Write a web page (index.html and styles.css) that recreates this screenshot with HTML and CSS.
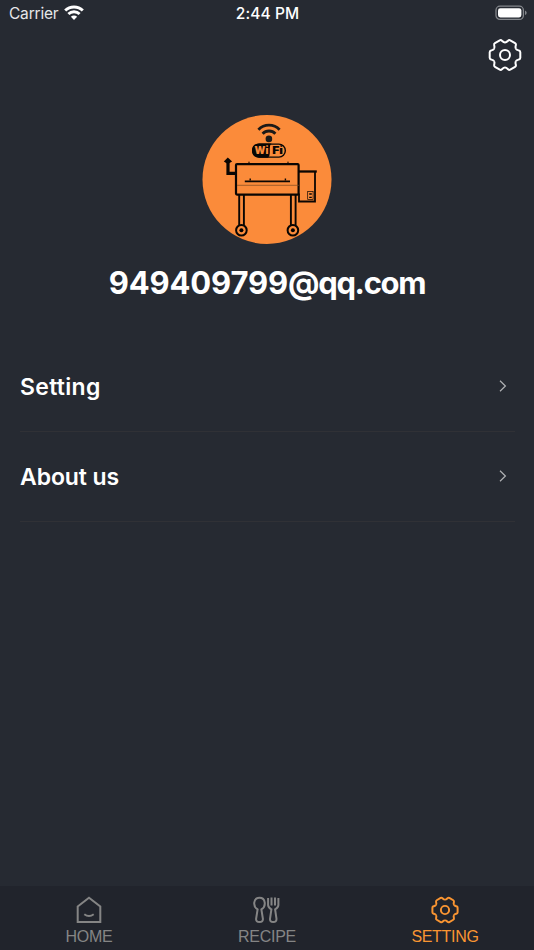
FILE: index.html
```html
<!DOCTYPE html>
<html lang="en">
<head>
<meta charset="utf-8">
<title>Setting</title>
<link rel="stylesheet" href="styles.css">
</head>
<body>
<svg class="defs" width="0" height="0" aria-hidden="true">
  <defs>
    <path id="tooth" d="M10.9 -6.3C11.7 -4.9 12.8 -4.8 13.9 -4.5Q15.3 -4.1 15.3 -2.8V2.8Q15.3 4.1 13.9 4.5C12.8 4.8 11.7 4.9 10.9 6.3"/>
    <symbol id="gear" viewBox="-17 -17 34 34">
      <use href="#tooth"/>
      <use href="#tooth" transform="rotate(60)"/>
      <use href="#tooth" transform="rotate(120)"/>
      <use href="#tooth" transform="rotate(180)"/>
      <use href="#tooth" transform="rotate(240)"/>
      <use href="#tooth" transform="rotate(300)"/>
      <circle r="5"/>
    </symbol>
  </defs>
</svg>
<div class="screen">
  <header class="status">
    <div class="carrier"><span>Carrier</span>
      <svg width="20" height="16" viewBox="0 0 20 16" fill="none" stroke="#fff" stroke-width="2.9">
        <path d="M1.2 5.6A12.4 12.4 0 0 1 18.8 5.6M4.4 9A8 8 0 0 1 15.6 9"/>
        <path d="M10 14.9L6.9 11.8A4.4 4.4 0 0 1 13.1 11.8Z" fill="#fff" stroke="none"/>
      </svg>
    </div>
    <div class="time">2:44 PM</div>
    <svg class="battery" width="32" height="16" viewBox="0 0 32 16">
      <rect x="1" y="1.2" width="27.4" height="13.2" rx="4" fill="none" stroke="#84878c" stroke-width="1.3"/>
      <rect x="3" y="3.2" width="23.4" height="9.2" rx="2.3" fill="#fff"/>
      <path d="M30 5.5Q31.7 6.2 31.7 7.8T30 10.1Z" fill="#84878c"/>
    </svg>
  </header>
  <div class="toolbar">
    <svg class="gear" width="34" height="34"><use href="#gear"/></svg>
  </div>
  <main>
    <section class="profile">
      <svg class="avatar" width="130" height="130" viewBox="0 -0.5 130 130">
        <circle cx="65" cy="65" r="64.5" fill="#fb8b3a"/>
        <g fill="none" stroke="#1c1a18" stroke-width="2.8">
          <path d="M56.4 15.2A14.5 14.5 0 0 1 77.6 15.2" />
          <path d="M60.6 19.2A8.9 8.9 0 0 1 73.4 19.2"/>
        </g>
        <circle cx="66.9" cy="24.4" r="3.3" fill="#1c1a18"/>
        <rect x="50.7" y="29.6" width="32.6" height="13" rx="6.4" fill="none" stroke="#080604" stroke-width="1.4"/>
        <path d="M57 29H69.5Q67.8 30.5 67.8 33.4V38.4Q67.8 41.6 66 43.2H57Q50 42.6 50 36T57 29Z" fill="#080604"/>
        <text class="wi" x="52.6" y="39.8" textLength="13.8" lengthAdjust="spacingAndGlyphs">Wi</text>
        <text class="fi" x="70.2" y="39.8" textLength="10.8" lengthAdjust="spacingAndGlyphs">Fi</text>
        <g fill="none" stroke="#0a0603">
          <rect x="34" y="49.6" width="62.6" height="30.5" rx="1" stroke-width="2.2"/>
          <path d="M35 70.8H97" stroke="#7d4a22" stroke-width=".7"/>
          <path d="M42.8 66.8H88" stroke-width="1.7"/>
          <path d="M48.2 66V64M83.4 66V64M47 48.3V47.3M86 48.3V47.3" stroke-width="1.4"/>
          <path d="M34 58.8H26V47" stroke-width="3.2"/>
          <path d="M97 57H114.8" stroke-width="2.3"/>
          <path d="M113 57V87H97V79" stroke-width="1.8"/>
          <path d="M37.2 80V111M41.9 80V111M88.9 80V111M93.6 80V111" stroke-width="1.9"/>
          <rect x="105.7" y="76.9" width="5.4" height="8.2" stroke-width=".7"/>
          <path d="M107.2 79.5H109.8M107.2 82.9H109.8" stroke-width="1.4"/>
          <circle cx="39.4" cy="115.8" r="5.3" stroke-width="2"/>
          <circle cx="90.9" cy="115.8" r="5.3" stroke-width="2"/>
        </g>
        <path d="M25.8 43.1L30.1 47L25.8 49.6L21.8 47Z" fill="#0a0603"/>
        <circle cx="39.4" cy="115.8" r="2"/><circle cx="90.9" cy="115.8" r="2"/>
      </svg>
      <h1><span class="digits">949409799</span><span class="domain">@qq.com</span></h1>
    </section>
    <ul class="menu">
      <li><span class="setting">Setting</span><svg width="8" height="12" viewBox="0 0 8 12"><path d="M1 .8L6.4 6L1 11.2"/></svg></li>
      <li><span class="about">About us</span><svg width="8" height="12" viewBox="0 0 8 12"><path d="M1 .8L6.4 6L1 11.2"/></svg></li>
    </ul>
  </main>
  <nav class="tabs">
    <a class="tab">
      <svg width="28" height="28" viewBox="0 0 28 28"><path d="M2.7 10.5L14 1.8L25.3 10.5V26H2.7ZM9.3 18.2Q14 21.8 18.7 18.2"/></svg>
      <span>HOME</span>
    </a>
    <a class="tab">
      <svg width="28" height="28" viewBox="0 0 28 28"><path d="M4.6 13.4C-.6 10.2 .4 1.8 6.5 1.8S13.6 10.2 8.4 13.4L9.9 22.8Q10.1 26 6.5 26T3.1 22.8ZM15.1 2V9.2Q15.3 11.8 18.4 13.4L17 22.8Q16.8 26 20.2 26T23.5 22.8L22.1 13.4Q25.2 11.8 25.4 9.2V2M18.5 1.5V9.5M22 1.5V9.5"/></svg>
      <span>RECIPE</span>
    </a>
    <a class="tab active">
      <svg width="28" height="28"><use href="#gear"/></svg>
      <span>SETTING</span>
    </a>
  </nav>
</div>
</body>
</html>
```
FILE: styles.css
```css
* { box-sizing: border-box; }
body { margin: 0; background: #262a32; color: #fff; font-family: Inter, "Liberation Sans", sans-serif; }
svg { display: block; flex: none; }
.defs { position: absolute; }
.screen { width: 534px; height: 950px; display: flex; flex-direction: column; }
.status { height: 28px; padding: 0 7px 0 9px; display: grid; grid-template-columns: 1fr auto 1fr; align-items: center; font-size: 15.5px; line-height: 28px; }
.carrier { display: flex; align-items: center; gap: 6px; letter-spacing: -.2px; color: #e6e7e9; }
.carrier svg { margin-top: -3px; }
.time { font-weight: 500; letter-spacing: .1px; margin-right: 1px; }
.battery { justify-self: end; margin-top: -3px; }
.toolbar { height: 86px; padding: 9.5px 12px 0; display: flex; justify-content: flex-end; }
.gear { fill: none; stroke: #fff; stroke-width: 2; }
main { flex: 1; }
.profile { display: flex; flex-direction: column; align-items: center; }
.wi, .fi { font: 900 10.5px Inter, sans-serif; }
.wi { fill: #fb8b3a; }
.fi { fill: #080604; }
h1 { margin: 19px 0 0; font-size: 31px; line-height: 40px; font-weight: 700; }
.digits { letter-spacing: -.15px; }
.domain { letter-spacing: -1.3px; }
.menu { list-style: none; margin: 38.5px 19px 0 20px; padding: 0; }
.menu li { height: 90.3px; padding-right: 8px; display: flex; align-items: center; justify-content: space-between; border-bottom: 1px solid #303136; font-size: 23px; font-weight: 600; }
.menu span { margin-top: 1px; }
.setting { letter-spacing: .3px; }
.about { letter-spacing: -.1px; }
.menu path { fill: none; stroke: #b0b2b5; stroke-width: 1.2; }
.tabs { height: 64px; display: grid; grid-template-columns: repeat(3, 1fr); background: #21242c; }
.tab { display: flex; flex-direction: column; align-items: center; padding-top: 9.5px; color: #858585; font: 16px/18px "Liberation Sans", sans-serif; letter-spacing: -.3px; }
.tab svg { fill: none; stroke: currentColor; stroke-width: 2; }
.tab span { margin-top: 4.5px; }
.tab.active { color: #fa9532; }
.active svg { stroke-width: 2.4; }
```
